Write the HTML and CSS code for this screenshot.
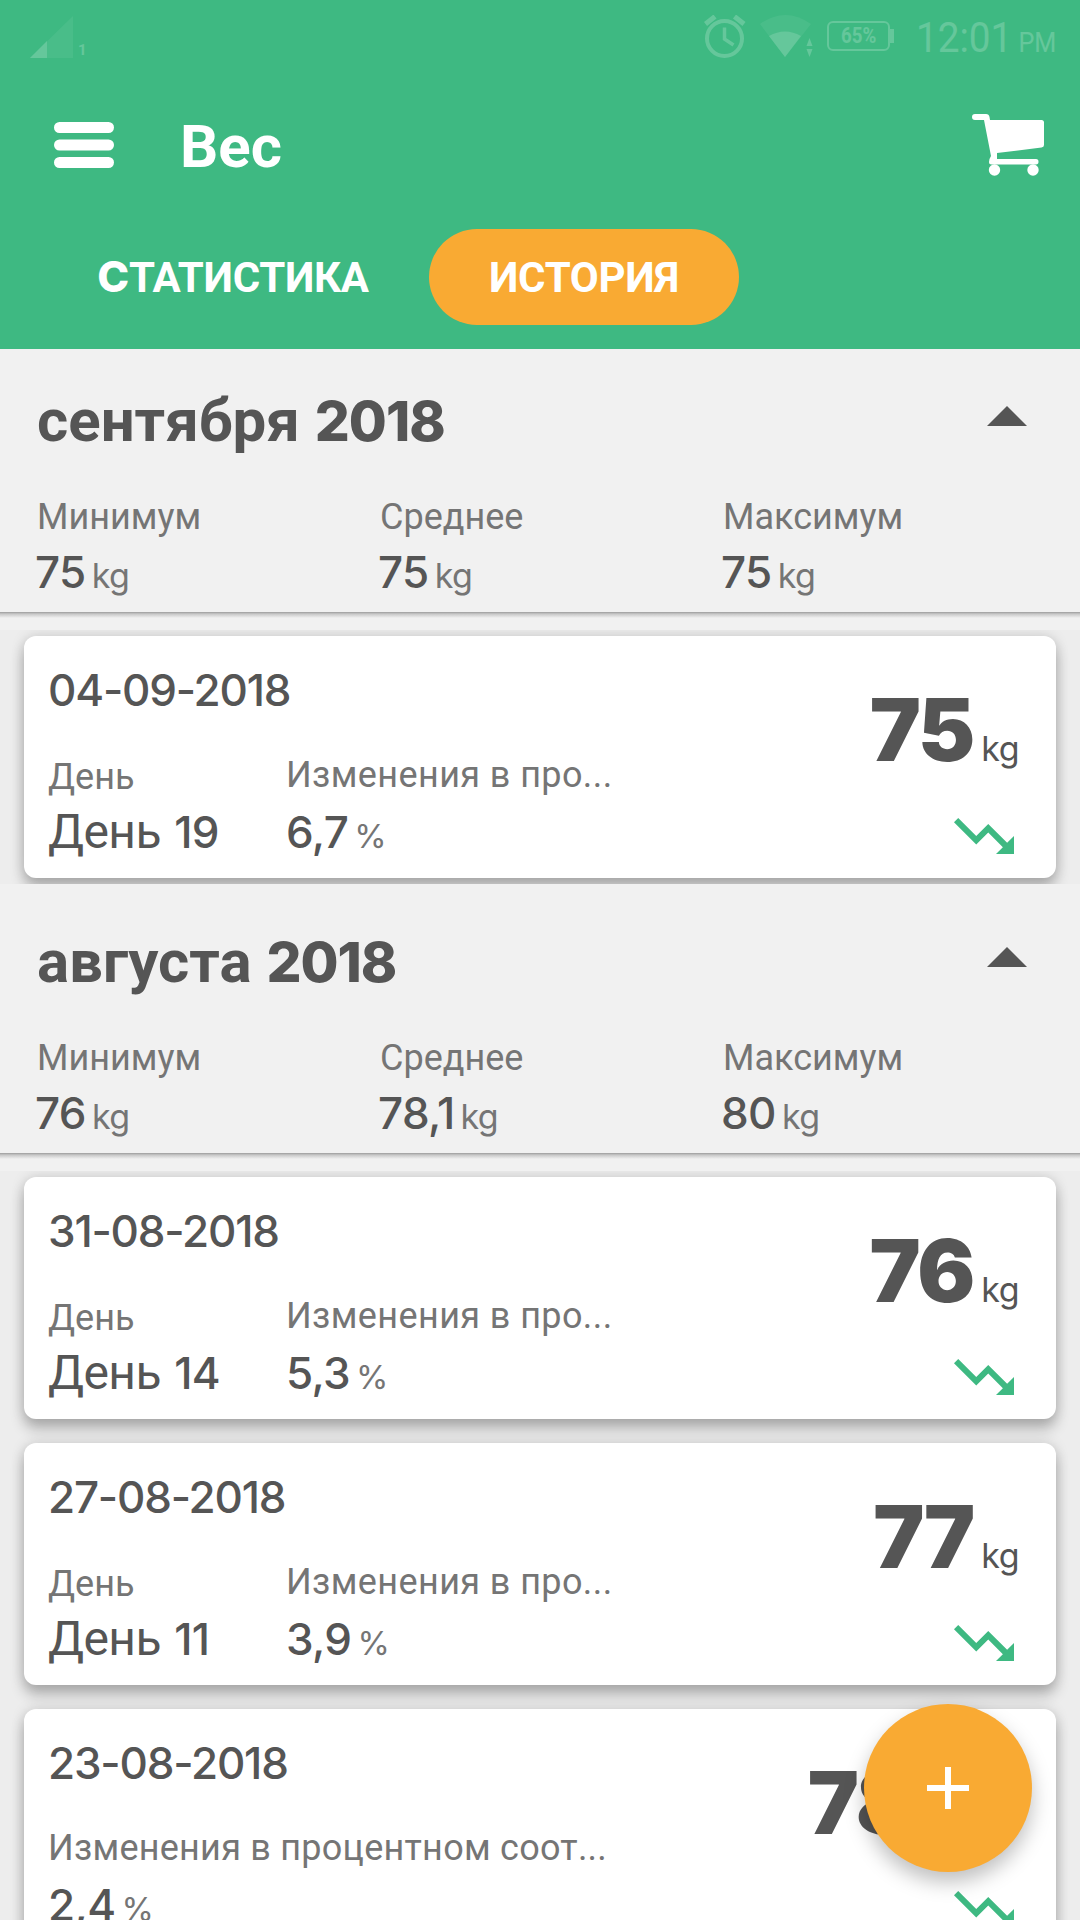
FILE: index.html
```
<!DOCTYPE html>
<html lang="ru">
<head>
	<meta charset="UTF-8">
	<title>Вес</title>
	<link rel="stylesheet" href="styles.css">
</head>
<body>
	<!-- shared icons -->
	<svg width="0" height="0" class="defs">
		<symbol id="trending-down" viewBox="0 0 24 24">
			<path d="M16 18l2.29-2.29-4.88-4.88-4 4L2 7.41 3.41 6l6 6 4-4 6.3 6.29L22 12v6z" />
		</symbol>
	</svg>

	<header class="header">
		<div class="statusbar">
			<svg class="signal" width="44" height="42" viewBox="0 0 44 42">
				<path d="M0 42L43 0V42z" opacity=".3" />
				<path d="M0 42L17 25V42z" />
			</svg>
			<span class="sim">1</span>
			<svg class="alarm" width="42" height="43" viewBox="0 0 42 43">
				<g fill="none" stroke="#fff" stroke-width="4">
					<circle cx="20.5" cy="23.5" r="17.5" />
					<path d="M20.5 12.5V24l9 6" stroke-width="3.5" />
					<path d="M1.5 9L11 1.5M40 9L30.5 1.5" stroke-width="5" />
				</g>
			</svg>
			<svg class="wifi" width="53" height="43" viewBox="0 0 53 43">
				<path d="M0 9Q25 -9 51 9L25 42z" opacity=".3" />
				<path d="M9 21Q25 12 41 21L25 42z" />
				<path d="M46.5 31l3-8 3 8zM46.5 34l3 8 3-8z" />
			</svg>
			<div class="battery"><span>65%</span></div>
			<div class="clock">12:01 <small>PM</small></div>
		</div>
		<div class="toolbar">
			<svg width="60" height="46" viewBox="0 0 60 46" fill="#fff">
				<rect width="60" height="11" rx="5.5" />
				<rect y="17.5" width="60" height="11" rx="5.5" />
				<rect y="35" width="60" height="11" rx="5.5" />
			</svg>
			<h1>Вес</h1>
			<svg class="cart" width="72" height="62" viewBox="0 0 72 62" fill="#fff">
				<path d="M3 0H14Q17 0 17.5 3L18 6H69.5Q72 6 72 8.5V31Q72 33.3 69.5 33.6L25 39V45H64Q66.5 45 66.5 47.7T64 50.5H19.5Q17 50.5 17 48Q17 45 19 42L12 6H3Q0 6 0 3T3 0z" />
				<circle cx="22.5" cy="56" r="5.7" />
				<circle cx="61" cy="56" r="5.7" />
			</svg>
		</div>
		<div class="tabs">
			<a class="tab"><span class="num">C</span>ТАТИСТИКА</a>
			<a class="tab active">ИСТОРИЯ</a>
		</div>
	</header>

	<main>
		<section>
			<div class="month">
				<div class="month-title">
					<h2>сентября <span class="num">2018</span></h2>
					<svg width="40" height="20" viewBox="0 0 40 20"><path d="M0 20L20 0L40 20z" /></svg>
				</div>
				<div class="stats">
					<div><p class="label">Минимум</p><p class="value">75<small>kg</small></p></div>
					<div><p class="label">Среднее</p><p class="value">75<small>kg</small></p></div>
					<div><p class="label">Максимум</p><p class="value">75<small>kg</small></p></div>
				</div>
			</div>
			<div class="divider"></div>
			<div class="list">
				<article class="card">
					<div class="info">
						<p class="date">04-09-2018</p>
						<div class="row">
							<div class="day"><p class="label">День</p><p class="value">День <span class="num">19</span></p></div>
							<div class="change"><p class="label">Изменения в про...</p><p class="value">6,7<small>%</small></p></div>
						</div>
					</div>
					<div class="result">
						<p class="weight">75<small>kg</small></p>
						<svg width="72" height="72"><use href="#trending-down" /></svg>
					</div>
				</article>
			</div>
		</section>

		<section>
			<div class="month">
				<div class="month-title">
					<h2>августа <span class="num">2018</span></h2>
					<svg width="40" height="20" viewBox="0 0 40 20"><path d="M0 20L20 0L40 20z" /></svg>
				</div>
				<div class="stats">
					<div><p class="label">Минимум</p><p class="value">76<small>kg</small></p></div>
					<div><p class="label">Среднее</p><p class="value">78,1<small>kg</small></p></div>
					<div><p class="label">Максимум</p><p class="value">80<small>kg</small></p></div>
				</div>
			</div>
			<div class="divider"></div>
			<div class="list">
				<article class="card">
					<div class="info">
						<p class="date">31-08-2018</p>
						<div class="row">
							<div class="day"><p class="label">День</p><p class="value">День <span class="num">14</span></p></div>
							<div class="change"><p class="label">Изменения в про...</p><p class="value">5,3<small>%</small></p></div>
						</div>
					</div>
					<div class="result">
						<p class="weight">76<small>kg</small></p>
						<svg width="72" height="72"><use href="#trending-down" /></svg>
					</div>
				</article>
				<article class="card">
					<div class="info">
						<p class="date">27-08-2018</p>
						<div class="row">
							<div class="day"><p class="label">День</p><p class="value">День <span class="num">11</span></p></div>
							<div class="change"><p class="label">Изменения в про...</p><p class="value">3,9<small>%</small></p></div>
						</div>
					</div>
					<div class="result">
						<p class="weight">77<small>kg</small></p>
						<svg width="72" height="72"><use href="#trending-down" /></svg>
					</div>
				</article>
				<article class="card">
					<div class="info">
						<p class="date">23-08-2018</p>
						<div class="row">
							<div class="change wide"><p class="label">Изменения в процентном соот...</p><p class="value">2,4<small>%</small></p></div>
						</div>
					</div>
					<div class="result">
						<p class="weight long">78,1<small>kg</small></p>
						<svg width="72" height="72"><use href="#trending-down" /></svg>
					</div>
				</article>
			</div>
		</section>
	</main>

	<div class="fab">
		<svg width="42" height="42" viewBox="0 0 42 42"><path d="M18 0h6v18h18v6H24v18h-6V24H0v-6h18z" fill="#fff" /></svg>
	</div>
</body>
</html>
```
FILE: styles.css
```
* {
	box-sizing: border-box;
}

body {
	position: relative;
	height: 1920px;
	margin: 0;
	overflow: hidden;
	font-family: Roboto, sans-serif;
	color: #555;
	background-color: #ededed;
}

h1, h2, p {
	margin: 0;
}

svg {
	display: block;
	flex: none;
}

.defs {
	position: absolute;
}

/* latin letters and digits */
.num {
	font-family: Inter, sans-serif;
	line-height: 0;
}

.header {
	position: relative;
	z-index: 1;
	height: 349px;
	color: #fff;
	background-color: #3eb982;
}

.statusbar {
	display: flex;
	align-items: center;
	height: 73px;
	padding-left: 30px;
}

.statusbar > * {
	opacity: .2;
}

.statusbar svg {
	fill: #fff;
}

.sim {
	width: 8px;
	margin: 27px 0 0 4px;
	font: bold 15px/15px Roboto, sans-serif;
}

.alarm {
	margin-left: 618px;
}

.wifi {
	margin-left: 14px;
}

.battery {
	position: relative;
	display: flex;
	justify-content: center;
	align-items: center;
	width: 63px;
	height: 30px;
	margin: -2px 0 0 14px;
	border: 2px solid #fff;
	border-radius: 6px;
	font-size: 22px;
	font-weight: bold;
}

.battery::after {
	content: "";
	position: absolute;
	right: -6px;
	top: 6px;
	width: 4px;
	height: 14px;
	background-color: #fff;
}

.battery span {
	transform: scaleX(.85);
}

.clock {
	margin-left: 26px;
	font-size: 43px;
	white-space: nowrap;
	transform: scaleX(.9);
	transform-origin: left;
}

.clock small {
	margin-left: -4px;
	font-size: 28px;
}

.toolbar {
	display: flex;
	align-items: center;
	height: 143px;
	padding: 0 36px 0 54px;
}

.toolbar h1 {
	margin: 3px 0 0 66px;
	font-size: 60px;
}

.cart {
	margin-left: auto;
}

.tabs {
	display: flex;
	margin: 13px 0 0 37px;
}

.tab {
	width: 392px;
	height: 96px;
	padding-top: 1px;
	border-radius: 48px;
	font-size: 42px;
	font-weight: bold;
	line-height: 96px;
	letter-spacing: -.3px;
	text-align: center;
}

.tab .num {
	font-size: 43px;
	font-weight: 800;
}

.tab.active {
	width: 310px;
	background-color: #f9aa33;
}

main {
	margin-top: -6px;
}

.month {
	height: 269px;
	padding: 42px 14px 0 37px;
	background-color: #f1f1f1;
}

.month-title {
	display: flex;
	justify-content: space-between;
	align-items: center;
}

.month-title h2 {
	font-size: 60px;
	line-height: 72px;
}

.month-title .num {
	font-size: 55px;
	font-weight: 800;
	letter-spacing: -1px;
}

.month-title svg {
	margin: -10px 39px 0 0;
	fill: #555;
}

.stats {
	display: grid;
	grid-template-columns: repeat(3, 1fr);
	margin-top: 38px;
}

.label {
	font-size: 36px;
	line-height: 44px;
	color: #757575;
	white-space: nowrap;
}

.value {
	font: 500 44px/50px Inter, sans-serif;
	letter-spacing: -.6px;
	white-space: nowrap;
}

.value small {
	margin-left: 6px;
	font-size: 34px;
	font-weight: 400;
	line-height: 0;
	color: #757575;
}

.stats .value {
	margin: 8px 0 0 -2px;
}

.divider {
	height: 18px;
	background: linear-gradient(#9c9c9c, #c8c8c8 2px, #f1f1f1 6px);
}

.list {
	display: flex;
	flex-direction: column;
	gap: 24px;
	padding: 6px 24px;
	overflow: hidden;
	background-color: #ededed;
}

.card {
	display: flex;
	justify-content: space-between;
	height: 242px;
	padding: 0 36px 0 24px;
	border-radius: 12px;
	background-color: #fff;
	box-shadow: 0 10px 14px rgba(0, 0, 0, .24), 0 0 14px rgba(0, 0, 0, .14);
}

.date {
	margin-top: 29px;
	font: 500 44px/50px Inter, sans-serif;
	letter-spacing: -1.2px;
}

.row {
	display: flex;
}

.day {
	width: 238px;
	padding-top: 40px;
}

.change {
	padding-top: 38px;
}

.card .value {
	margin-top: 7px;
	line-height: 56px;
}

.change .label {
	letter-spacing: .4px;
}

.change.wide .label {
	letter-spacing: .25px;
}

.day .value {
	margin-top: 5px;
	font: 400 48px/56px Roboto, sans-serif;
}

.day .num {
	margin-left: 2px;
	font-size: 44px;
	font-weight: 500;
}

.change small {
	font-size: 33px;
}

.result {
	display: flex;
	flex-direction: column;
	align-items: flex-end;
	padding-top: 44px;
}

.weight {
	margin-right: 1px;
	font: 900 86px/100px Inter, sans-serif;
	letter-spacing: -2px;
	white-space: nowrap;
}

.weight small {
	margin-left: 8px;
	font-size: 34px;
	font-weight: 400;
	letter-spacing: -.5px;
	line-height: 0;
}

.weight.long {
	margin-right: 5px;
}

.result svg {
	margin-top: 20px;
	fill: #3eb982;
}

.fab {
	position: absolute;
	left: 864px;
	top: 1704px;
	z-index: 2;
	display: flex;
	justify-content: center;
	align-items: center;
	width: 168px;
	height: 168px;
	border-radius: 50%;
	background-color: #f9aa33;
	box-shadow: 0 10px 20px rgba(0, 0, 0, .25);
}
```
